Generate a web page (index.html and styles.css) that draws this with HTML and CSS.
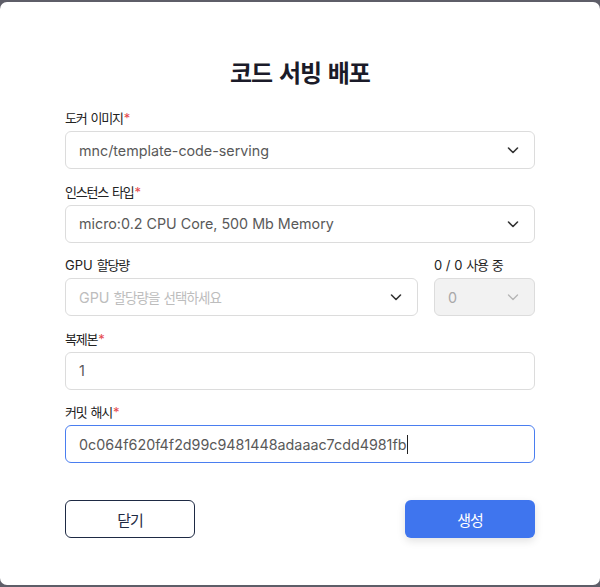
FILE: index.html
```html
<!DOCTYPE html>
<html lang="ko">
<head>
<meta charset="utf-8">
<link rel="stylesheet" href="styles.css">
</head>
<body>
<div class="modal">
  <h1 class="title">코드 서빙 배포</h1>
  <form class="form">
    <div class="field">
      <div class="label">도커 이미지<span class="req">*</span></div>
      <div class="control select">
        <span class="value">mnc/template-code-serving</span>
        <svg class="chev" width="14" height="14" viewBox="0 0 14 14"><path d="M2.5 5l4.5 4.5L11.5 5" fill="none" stroke="#333" stroke-width="1.6" stroke-linecap="round" stroke-linejoin="round"/></svg>
      </div>
    </div>
    <div class="field">
      <div class="label">인스턴스 타입<span class="req">*</span></div>
      <div class="control select">
        <span class="value">micro:0.2 CPU Core, 500 Mb Memory</span>
        <svg class="chev" width="14" height="14" viewBox="0 0 14 14"><path d="M2.5 5l4.5 4.5L11.5 5" fill="none" stroke="#333" stroke-width="1.6" stroke-linecap="round" stroke-linejoin="round"/></svg>
      </div>
    </div>
    <div class="field row">
      <div class="col-main">
        <div class="label"><span class="lat">GPU</span> 할당량</div>
        <div class="control select">
          <span class="value placeholder">GPU <span class="ko">할당량을 선택하세요</span></span>
          <svg class="chev" width="14" height="14" viewBox="0 0 14 14"><path d="M2.5 5l4.5 4.5L11.5 5" fill="none" stroke="#333" stroke-width="1.6" stroke-linecap="round" stroke-linejoin="round"/></svg>
        </div>
      </div>
      <div class="col-side">
        <div class="label"><span class="lat">0 / 0</span> 사용 중</div>
        <div class="control select disabled">
          <span class="value muted">0</span>
          <svg class="chev" width="14" height="14" viewBox="0 0 14 14"><path d="M2.5 5l4.5 4.5L11.5 5" fill="none" stroke="#b5b5b5" stroke-width="1.3" stroke-linecap="round" stroke-linejoin="round"/></svg>
        </div>
      </div>
    </div>
    <div class="field">
      <div class="label">복제본<span class="req">*</span></div>
      <div class="control"><span class="value">1</span></div>
    </div>
    <div class="field">
      <div class="label">커밋 해시<span class="req">*</span></div>
      <div class="control focused"><span class="value">0c064f620f4f2d99c9481448adaaac7cdd4981fb</span><span class="caret"></span></div>
    </div>
    <div class="actions">
      <button type="button" class="btn btn-outline">닫기</button>
      <button type="button" class="btn btn-primary">생성</button>
    </div>
  </form>
</div>
</body>
</html>
```

FILE: styles.css
```css
* { box-sizing: border-box; }
html, body { margin: 0; padding: 0; }
body {
  background: #5e5e68;
  width: 600px;
  height: 587px;
  padding-top: 2px;
  font-family: Inter, "Noto Sans CJK KR", sans-serif;
}
.modal {
  background: #fff;
  height: 583px;
  border-radius: 7px;
  padding: 54px 65px 0;
}
.title {
  margin: 0;
  font-size: 24px;
  line-height: 32px;
  font-weight: 700;
  color: #1b1b29;
  text-align: center;
  letter-spacing: -1px;
  word-spacing: 1px;
  font-family: "Noto Sans CJK KR", Inter, sans-serif;
}
.form {
  margin-top: 22px;
  display: flex;
  flex-direction: column;
  gap: 14.5px;
}
.field { display: flex; flex-direction: column; }
.field.row { flex-direction: row; gap: 16px; }
.col-main { flex: 1; display: flex; flex-direction: column; }
.col-side { width: 101px; display: flex; flex-direction: column; }
.label {
  font-size: 13px;
  line-height: 16px;
  height: 16px;
  margin-bottom: 5px;
  color: #222;
  letter-spacing: -1.2px;
  word-spacing: 1.5px;
  white-space: nowrap;
  font-family: Inter, "Noto Sans CJK KR", sans-serif;
}
.lat { letter-spacing: 0; word-spacing: 0; }
.req { color: #e5484d; margin-left: 1px; }
.control {
  height: 38px;
  border: 1px solid #dcdcdc;
  border-radius: 6px;
  display: flex;
  align-items: center;
  padding: 0 14px 0 13px;
  font-size: 14.3px;
  color: #595959;
  background: #fff;
}
.select { justify-content: space-between; }
.value { white-space: nowrap; }
.ko { font-size: 13.5px; letter-spacing: -0.9px; word-spacing: 1px; }
.placeholder { color: #bdbdbd; }
.disabled { background: #f2f2f2; }
.muted { color: #a8a8a8; }
.chev { flex: none; }
.focused { border-color: #4a7ef0; }
.caret {
  display: inline-block;
  width: 1px;
  height: 19px;
  background: #222;
  margin-left: 1px;
}
.actions {
  margin-top: 22.5px;
  display: flex;
  justify-content: space-between;
}
.btn {
  width: 130px;
  height: 38px;
  border-radius: 6px;
  font-size: 15px;
  letter-spacing: -1px;
  font-family: "Noto Sans CJK KR", Inter, sans-serif;
  cursor: pointer;
}
.btn-outline {
  background: #fff;
  border: 1px solid #1e2a44;
  color: #1e2a44;
}
.btn-primary {
  background: #3f75ee;
  border: none;
  color: #fff;
  box-shadow: 0 3px 8px rgba(0,0,0,0.12);
}
```
